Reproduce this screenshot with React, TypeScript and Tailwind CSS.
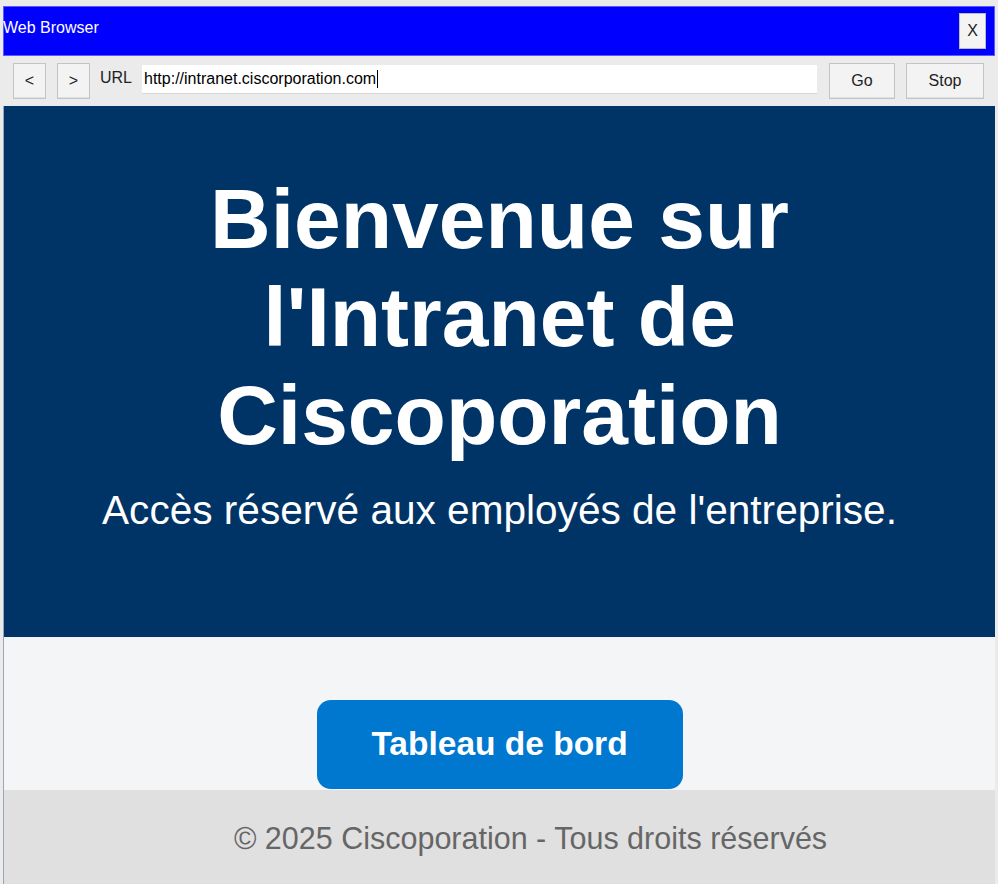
import React from 'react';

const toolBtn =
    'h-[36px] border border-[#c4c4c4] bg-[#f3f3f3] text-[16px] text-[#222] flex items-center justify-center shadow-[inset_0_-1px_0_#e0e0e0]';

const App: React.FC = () => {
    return (
        <div className="w-[998px] h-[884px] bg-[#ebebeb] font-['Liberation_Sans',Arial,sans-serif] overflow-hidden pt-[6px] pl-[3px] pr-[3px]">
            {/* window title bar */}
            <div className="h-[50px] bg-[#0000ff] border border-[#5a5aff] flex items-start justify-between pr-[8px]">
                <span className="text-white text-[16px] leading-[18px] mt-[12px] -ml-[1px]">Web Browser</span>
                <button className="mt-[6px] w-[27px] h-[36px] border border-[#bdbdbd] bg-[#f4f4f4] text-[16px] text-[#222] flex items-center justify-center">
                    X
                </button>
            </div>

            {/* toolbar */}
            <div className="h-[50px] flex items-center pl-[10px] pr-[8px]">
                <button className={`${toolBtn} w-[33px]`}>&lt;</button>
                <button className={`${toolBtn} w-[33px] ml-[11px]`}>&gt;</button>
                <span className="ml-[10px] text-[16px] text-[#222] -mt-[6px]">URL</span>
                <div className="ml-[10px] w-[675px] h-[29px] bg-white border-b border-[#d6d6d6] flex items-center pl-[2px] text-[16px] text-black -mt-[4px]">
                    http://intranet.ciscorporation.com
                    <span className="inline-block w-[1px] h-[18px] bg-black ml-[1px]"></span>
                </div>
                <button className={`${toolBtn} w-[66px] ml-[12px]`}>Go</button>
                <button className={`${toolBtn} w-[78px] ml-[11px]`}>Stop</button>
            </div>

            {/* page content */}
            <div className="w-[992px] border-l border-[#9aa6b6]">
                <section className="bg-[#003366] pt-[64px] pb-[103px] text-center text-white">
                    <h1 className="text-[84px] leading-[98px] font-bold px-[180px]">
                        Bienvenue sur l'Intranet de Ciscoporation
                    </h1>
                    <p className="text-[40.6px] leading-[48px] mt-[22px]">
                        Accès réservé aux employés de l'entreprise.
                    </p>
                </section>

                <section className="bg-[#f4f5f7] h-[153px] flex justify-center pt-[63px]">
                    <button className="w-[366px] h-[89px] rounded-[14px] bg-[#0078cf] text-white text-[33.5px] font-bold">
                        Tableau de bord
                    </button>
                </section>

                <footer className="bg-[#e0e0e0] h-[94px] pt-[30px] pl-[62px] text-center text-[30.5px] leading-[36px] text-[#666666]">
                    © 2025 Ciscoporation - Tous droits réservés
                </footer>
            </div>
        </div>
    );
};

export default App;
